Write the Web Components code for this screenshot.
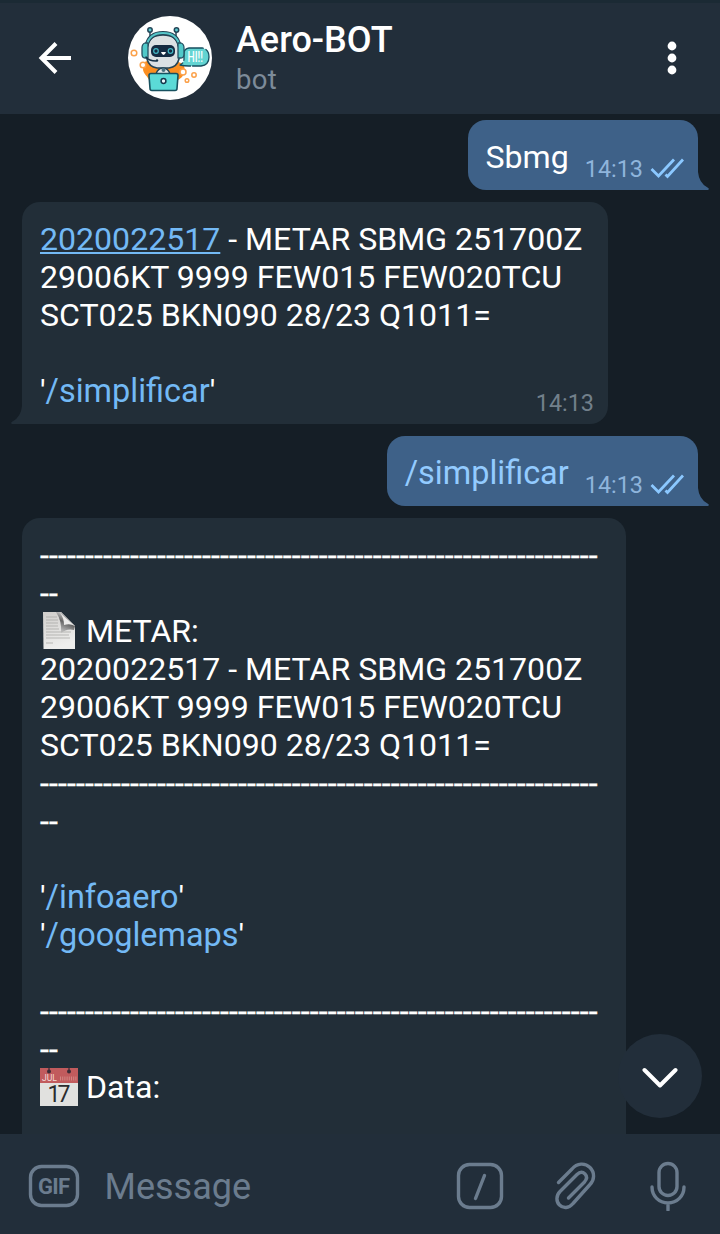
<!DOCTYPE html>
<html lang="en">
<head>
<meta charset="utf-8">
<title>Aero-BOT</title>
<style>
html,body{margin:0;height:100%;background:#151e26}
body{font-family:Roboto,"Noto Sans",sans-serif;color:#fff;overflow:hidden}
</style>
</head>
<body>
<chat-app>
  <chat-header slot="header" name="Aero-BOT" status="bot"></chat-header>
  <chat-message out time="14:13">Sbmg</chat-message>
  <chat-message time="14:13" style="--w:586px"><chat-link line>2020022517</chat-link> - METAR SBMG 251700Z<br>29006KT 9999 FEW015 FEW020TCU<br>SCT025 BKN090 28/23 Q1011=<br><br>'<chat-link>/simplificar</chat-link>'</chat-message>
  <chat-message out time="14:13"><chat-link out>/simplificar</chat-link></chat-message>
  <chat-message open style="--w:604px"><dash-rule></dash-rule><page-emoji></page-emoji> METAR:<br>2020022517 - METAR SBMG 251700Z<br>29006KT 9999 FEW015 FEW020TCU<br>SCT025 BKN090 28/23 Q1011=<br><dash-rule></dash-rule><br>'<chat-link>/infoaero</chat-link>'<br>'<chat-link>/googlemaps</chat-link>'<br><br><dash-rule></dash-rule><calendar-emoji></calendar-emoji> Data:</chat-message>
  <scroll-button slot="float"></scroll-button>
  <message-bar slot="footer"></message-bar>
</chat-app>
<script>
const define = (name, html) => customElements.define(name, class extends HTMLElement {
  constructor() {
    super();
    this.attachShadow({mode: 'open'}).innerHTML = typeof html === 'function' ? html(this) : html;
  }
});

define('chat-app', `<style>
:host{display:flex;flex-direction:column;width:720px;height:1234px;position:relative;background:#151e26}
main{flex:1;min-height:0;overflow:hidden;display:flex;flex-direction:column;gap:12px;padding:6px 22px 0}
.float{position:absolute;right:18px;bottom:116px}
</style>
<slot name="header"></slot><main><slot></slot></main><div class="float"><slot name="float"></slot></div><slot name="footer"></slot>`);

define('bot-avatar', `<style>:host{display:block;width:84px;height:84px}svg{display:block}</style>
<svg width="84" height="84" viewBox="0 0 84 84" fill="none" stroke-linecap="round" stroke-linejoin="round">
<circle cx="42" cy="42" r="42" fill="#fff"/>
<path d="M16 47c2-3 8-3 12 0l22-1c5 1 8 5 6 10 0 4-3 6-6 8l-28 2c-2-6-7-8-7-13z" fill="#fb8e20"/>
<g stroke="#fba14a" stroke-width="1.5" fill="#fff"><circle cx="6" cy="37" r="2.8"/><circle cx="15" cy="49" r="2.8"/><circle cx="55" cy="56" r="3"/><circle cx="66" cy="59" r="2.2"/><circle cx="59" cy="64.500" r="1.800"/></g>
<path d="M61 32h13q7 1 7 9t-8 9H61q-5 0-9-1 4-2 4-6v-6q0-4 5-5z" fill="#63d4d2" stroke="#174e5f" stroke-width="1.300" stroke-dasharray="14 3 30 2"/>
<text x="59.500" y="46" font-family="Roboto,sans-serif" font-size="14" font-weight="500" fill="#f7ffff" textLength="15.500" lengthAdjust="spacingAndGlyphs">HI!!</text>
<g stroke="#234456" stroke-width="1.500"><path d="M22 16v9M48 16v9"/><circle cx="22" cy="14" r="2.200" fill="#5acbd0"/><circle cx="48.500" cy="14" r="2.200" fill="#5acbd0"/></g>
<path d="M19 31q2-12 16-12t16 12v12q-2 8-10 9H29q-8-1-10-9z" fill="#dbe1e4" stroke="#234456" stroke-width="1.600"/>
<path d="M18.500 30Q21 17 35 17t16.500 13" stroke="#234456" stroke-width="4"/>
<path d="M18.500 30Q21 17 35 17t16.500 13" stroke="#55c6c9" stroke-width="2"/>
<path d="M20 27h-3q-3 1-3 5v6q0 4 3 4h3zM50 27h3q3 1 3 5v6q0 4-3 4h-3z" fill="#50c9c9" stroke="#245263" stroke-width="1.300"/>
<rect x="23" y="29" width="24" height="12" rx="5" fill="#142b42"/>
<g stroke="#43b7c5" stroke-width="1.200"><circle cx="28" cy="35" r="2.300"/><circle cx="42.500" cy="35" r="2.300"/></g>
<path d="M33 36h5q-1 3-2.500 3T33 36z" fill="#fff"/>
<path d="M18 41q3 4 10 4" stroke="#163247" stroke-width="1.400"/><circle cx="29" cy="44.500" r="1.200" fill="#163247"/>
<path d="M28 58q2-6 7-6t7 6z" fill="#e3e8ea" stroke="#234456" stroke-width="1.400"/><circle cx="35.500" cy="54" r="2" fill="#4a7180"/>
<path d="M23 57.500h25q2 0 2 2l-1 13q0 2-2 2H24q-2 0-2-2l-1-13q0-2 2-2z" fill="#5bdad7" stroke="#17515f" stroke-width="1.600"/>
<circle cx="35.500" cy="65" r="2.400" fill="#effcff" stroke="#17384d" stroke-width="1.500"/>
</svg>`);

define('chat-header', el => `<style>
:host{display:flex;align-items:center;height:114px;background:#222e3a;box-shadow:inset 0 3px #1b2a34;flex:none}
.back{margin-left:36px;width:38px;height:38px}
bot-avatar{margin:2px 0 0 54px}
.who{margin-left:24px;flex:1;padding-top:4px}
.name{font-weight:500;font-size:36px;line-height:40px}
.st{font-size:27.500px;line-height:36px;color:#7d8b99;margin-top:2px;letter-spacing:.3px}
.more{margin-right:38px}
svg{display:block}
</style>
<svg class="back" viewBox="0 0 38 38" fill="none" stroke="#fff" stroke-width="4"><path d="M35 20H6M20 5.500 5.500 20 20 34.500"/></svg>
<bot-avatar></bot-avatar>
<div class="who"><div class="name">${el.getAttribute('name')}</div><div class="st">${el.getAttribute('status')}</div></div>
<svg class="more" width="20" height="40" fill="#fff"><circle cx="10" cy="9" r="4.400"/><circle cx="10" cy="21" r="4.400"/><circle cx="10" cy="33" r="4.400"/></svg>`);

define('chat-message', el => {
  const out = el.hasAttribute('out'), open = el.hasAttribute('open'), time = el.getAttribute('time');
  return `<style>
:host{display:block;position:relative;box-sizing:border-box;flex:none;border-radius:18px;font-size:32.100px;line-height:38px;
${out ? 'align-self:flex-end;height:70px;padding:18px 14px 14px 18px;background:#3e6188;border-bottom-right-radius:0;display:flex'
      : 'align-self:flex-start;width:var(--w);padding:18px 14px 14px 18px;background:#222e38;' + (open ? 'height:660px' : 'height:222px;border-bottom-left-radius:0')}}
.text{white-space:nowrap}
.meta{font-size:23.400px;line-height:28px;display:flex;gap:7px;${out ? 'color:#8fb5dc;margin:17px 0 0 16px' : 'color:#72808b;justify-content:flex-end;margin-top:-21px'}}
.tail{position:absolute;bottom:0;${out ? 'left:100%' : 'right:100%;transform:scaleX(-1)'}}
</style><div class="text"><slot></slot></div>
${time ? `<div class="meta"><span>${time}</span>${out ? '<svg width="34" height="28" fill="none" stroke="#8bc8ff" stroke-width="2.800"><path d="m1.500 14 7 7L24 4.500M15.500 19.500l2 2L33 4.500"/></svg>' : ''}</div>` : ''}
${open ? '' : `<svg class="tail" width="11" height="18"><path d="M0 0Q1 11 9.500 15.500 12 17 10 18H0z" fill="${out ? '#3e6188' : '#222e38'}"/></svg>`}`;
});

define('chat-link', el => `<style>:host{color:${el.hasAttribute('out') ? '#93cbff' : '#73b9f5'};${el.hasAttribute('line') ? 'text-decoration:underline;text-decoration-thickness:2px;text-underline-offset:2px' : 'font-size:32.450px'}}</style><slot></slot>`);

define('dash-rule', `<style>:host{display:block;letter-spacing:.13px;-webkit-text-stroke:.3px #fff}</style>${'-'.repeat(62)}<br>--`);

define('page-emoji', `<style>:host{display:inline-block;width:38px;height:38px;vertical-align:top}svg{display:block}</style>
<svg width="38" height="38"><defs><linearGradient id="p" x2=".3" y2="1"><stop stop-color="#d0cecb"/><stop offset="1" stop-color="#eeeeed"/></linearGradient><linearGradient id="s" x1=".7" x2=".3" y2="1"><stop stop-color="#eee"/><stop offset=".5" stop-color="#666"/><stop offset="1" stop-color="#ccc"/></linearGradient></defs>
<path d="M3 0h18l14 14v23H3.500z" fill="url(#p)"/><path d="M16 0h5l14 14-1 4q-7-2-13 3 1-12-5-21z" fill="url(#s)"/><path d="m20 1 15 13q-5-3-11-1 0-7-4-12z" fill="#ecebea"/>
<path d="M6 5h11M6 8h12M6 11h12M6 14h12M6 17h13M6 20h25M6 23h23M6 26h24M6 31h7" stroke="#aaa9a7" stroke-width=".8"/></svg>`);

define('calendar-emoji', `<style>:host{display:inline-block;width:38px;height:38px;vertical-align:top}svg{display:block;overflow:visible;font-family:Roboto,sans-serif}</style>
<svg width="38" height="38"><path d="M0 1h38v37H0z" fill="#e1e1df"/><path d="M0 0h38v15H0z" fill="#c15b5d"/><path d="M9 0v3M29 0v3" stroke="#713c44" stroke-width="2"/><circle cx="9" cy="3.500" r="2" fill="#3b2d38"/><circle cx="29" cy="3.500" r="2" fill="#3b2d38"/>
<text x="2" y="13" font-size="8.500" fill="#f4dcda" textLength="15" lengthAdjust="spacingAndGlyphs">JUL</text><path d="M20 10.500h17" stroke="#d38583" stroke-width="4" stroke-dasharray="1 1.200"/>
<text x="19" y="34" font-size="23" text-anchor="middle" fill="#2c2c2e" textLength="23">17</text></svg>`);

define('scroll-button', `<style>:host{display:grid;place-items:center;width:84px;height:84px;border-radius:50%;background:#222e3a}</style>
<svg width="40" height="24" fill="none" stroke="#fff" stroke-width="4" stroke-linecap="round" stroke-linejoin="round"><path d="m4.500 6 15.500 15.500L35.500 6"/></svg>`);

define('message-bar', `<style>
:host{display:flex;align-items:center;box-sizing:border-box;height:100px;flex:none;background:#222e3a;color:#6b7c8e;padding:4px 34px 0 28px}
.ph{flex:1;margin-left:24.500px;font-size:36px;line-height:42px;padding-top:2px}
svg{display:block;fill:none;stroke:#6b7c8e;stroke-width:3.400;stroke-linecap:round;stroke-linejoin:round}
text{fill:#6b7c8e;stroke:none;font:700 22px Roboto,sans-serif}
.cmd{margin-right:51px}.clip{margin-right:53px}
</style>
<svg width="52" height="44"><rect x="2.500" y="2.500" width="47" height="39" rx="11"/><text x="26" y="30" text-anchor="middle" textLength="32">GIF</text></svg>
<div class="ph">Message</div>
<svg class="cmd" width="48" height="48"><rect x="2.500" y="2.500" width="43" height="43" rx="11"/><path d="m28.500 13.500-9 23"/></svg>
<svg class="clip" width="42" height="50"><path d="M3.500 21.500 17 8C22 2 30 1.500 35 6.500S39.500 19 35 23.500L18 42.500C14 47.500 8 47.500 4.500 44S1 34.500 5 30.500L22 13.500C25 10.500 28 11 30 13S32 18 29.500 21L13.500 37"/></svg>
<svg width="36" height="50"><rect x="9" y="2.500" width="18" height="32" rx="9"/><path d="M2 26c0 9 7 16 16 16s16-7 16-16M18 42v7"/></svg>`);
</script>
</body>
</html>
